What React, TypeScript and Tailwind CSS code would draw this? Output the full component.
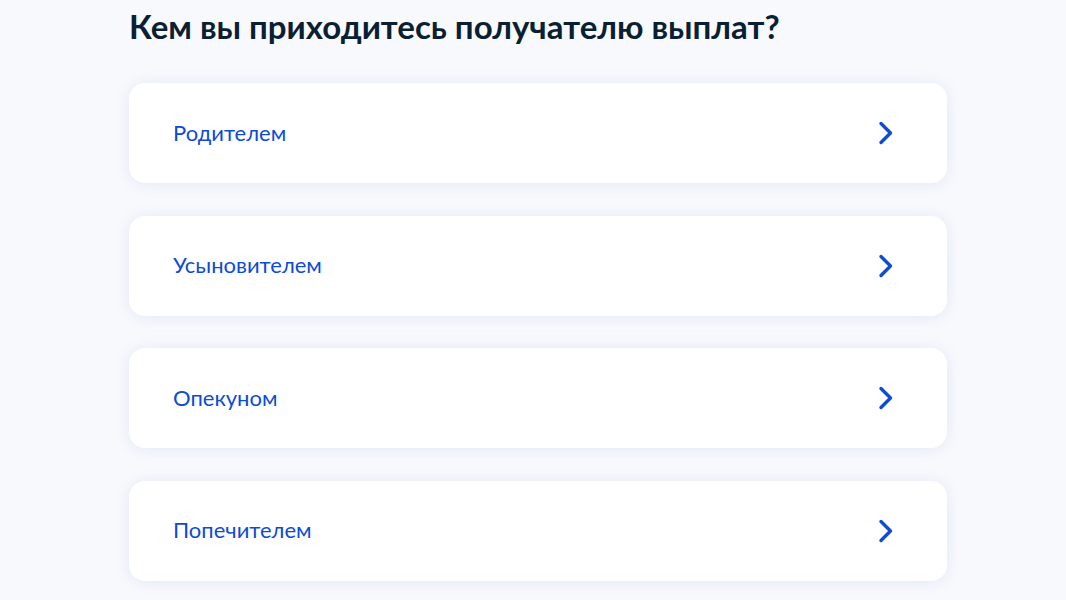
import React from "react";

const items = ["Родителем", "Усыновителем", "Опекуном", "Попечителем"];

export default function App() {
  return (
    <div className="min-h-[600px] w-full bg-[#f8f9fd] overflow-hidden" style={{ fontFamily: "Lato, 'Noto Sans', sans-serif" }}>
      <div className="ml-[129px] w-[818px] pt-[4px]">
        <h1 className="text-[33px] leading-[44px] font-bold text-[#0b1f33]">
          Кем вы приходитесь получателю выплат?
        </h1>
        <div className="mt-[35px] flex flex-col gap-[32.67px]">
          {items.map((t) => (
            <div
              key={t}
              className="h-[100px] rounded-[16px] bg-white shadow-[0_1px_14px_rgba(200,210,235,0.45)] flex items-center justify-between pl-[44px] pr-[53px]"
            >
              <span className="text-[22px] text-[#0d4cd3] -mt-[2px]">{t}</span>
              <svg width="16" height="24" viewBox="0 0 16 24" fill="none">
                <path d="M3 2.5 L12.5 12 L3 21.5" stroke="#0d4cd3" strokeWidth="3.4" strokeLinecap="round" strokeLinejoin="round" />
              </svg>
            </div>
          ))}
        </div>
      </div>
    </div>
  );
}
